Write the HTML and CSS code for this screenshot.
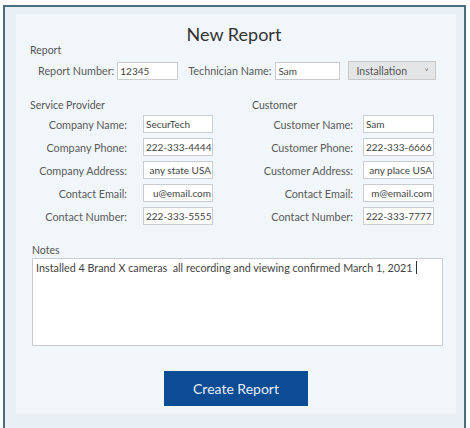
FILE: index.html
```html
<!DOCTYPE html>
<html lang="en">
<head>
  <meta charset="UTF-8">
  <meta name="viewport" content="width=device-width, initial-scale=1.0">
  <title>New Report</title>
  <link rel="stylesheet" href="styles.css">
</head>
<body>
  <div class="window">
    <div class="panel">
      <h1>New Report</h1>

      <div class="group-title">Report</div>
      <div class="report-row">
        <span class="label">Report Number:</span>
        <div class="field num">12345</div>
        <span class="label tech">Technician Name:</span>
        <div class="field tech-field">Sam</div>
        <div class="select">
          <span>Installation</span>
          <span class="arrow">&#709;</span>
        </div>
      </div>

      <div class="columns">
        <div class="group provider">
          <div class="group-title span">Service Provider</div>
          <span class="label">Company Name:</span>
          <div class="field">SecurTech</div>
          <span class="label">Company Phone:</span>
          <div class="field">222-333-4444</div>
          <span class="label">Company Address:</span>
          <div class="field end">any state USA</div>
          <span class="label">Contact Email:</span>
          <div class="field end">u@email.com</div>
          <span class="label">Contact Number:</span>
          <div class="field">222-333-5555</div>
        </div>

        <div class="group customer">
          <div class="group-title span">Customer</div>
          <span class="label">Customer Name:</span>
          <div class="field">Sam</div>
          <span class="label">Customer Phone:</span>
          <div class="field">222-333-6666</div>
          <span class="label">Customer Address:</span>
          <div class="field end">any place USA</div>
          <span class="label">Contact Email:</span>
          <div class="field end">m@email.com</div>
          <span class="label">Contact Number:</span>
          <div class="field">222-333-7777</div>
        </div>
      </div>

      <div class="group-title notes-title">Notes</div>
      <div class="notes">Installed 4 Brand X cameras &nbsp;all recording and viewing confirmed March 1, 2021<span class="caret"></span></div>

      <div class="actions">
        <button class="create">Create Report</button>
      </div>
    </div>
  </div>
</body>
</html>
```

FILE: styles.css
```css
body {
  margin: 0;
  background-color: #fff;
  font-family: Lato, "Noto Sans", sans-serif;
  color: #5a5a5a;
}

.window {
  margin: 5px 4px 0 3px;
  height: 417px;
  border: 2px solid #4b6e7e;
  background-color: #e8f0f6;
  padding: 7px 8px 0 11px;
}

.panel {
  background-color: #f1f6fa;
  height: 400px;
  padding: 0 0 0 14px;
}

h1 {
  margin: 0 0 0 -18px;
  padding-top: 10px;
  font-size: 18px;
  font-weight: normal;
  line-height: 20px;
  color: #333;
  text-align: center;
}

.group-title {
  font-size: 10.5px;
  line-height: 12px;
  color: #555;
}

.label {
  font-size: 10.8px;
  color: #5a5a5a;
  text-align: right;
  white-space: nowrap;
}

.field {
  height: 18px;
  box-sizing: border-box;
  border: 1px solid #c9ccd0;
  background-color: #fff;
  font-size: 10px;
  color: #444;
  display: flex;
  align-items: center;
  padding: 0 2px;
  overflow: hidden;
  white-space: nowrap;
}

.field.end {
  justify-content: flex-end;
  padding-right: 1px;
}

.report-row {
  display: flex;
  align-items: center;
  margin-top: 5px;
  padding-left: 8px;
}

.report-row .label {
  margin-right: 3px;
}

.report-row .num {
  width: 61px;
}

.report-row .tech {
  margin-left: 10px;
  margin-right: 4px;
}

.report-row .tech-field {
  width: 65px;
}

.select {
  width: 88px;
  height: 19px;
  box-sizing: border-box;
  margin-left: 8px;
  border: 1px solid #c9c9c9;
  background-color: #e4e5e6;
  font-size: 10.5px;
  color: #555;
  display: flex;
  align-items: center;
  justify-content: space-between;
  padding: 0 7px;
}

.select .arrow {
  font-size: 8px;
}

.columns {
  display: flex;
  gap: 39px;
  margin-top: 19px;
}

.group {
  display: grid;
  row-gap: 5px;
  align-items: center;
}

.group .span {
  grid-column: 1 / 3;
  margin-bottom: -1px;
}

.provider {
  grid-template-columns: 97px 70px;
  column-gap: 16px;
}

.customer {
  grid-template-columns: 101px 71px;
  column-gap: 10px;
}

.notes-title {
  margin-top: 19px;
  padding-left: 2px;
}

.notes {
  margin: 2px 0 0 2px;
  width: 411px;
  height: 88px;
  box-sizing: border-box;
  border: 1px solid #c9ccd0;
  background-color: #fff;
  font-size: 10.8px;
  color: #444;
  padding: 2px 3px;
  white-space: nowrap;
}

.caret {
  display: inline-block;
  width: 1px;
  height: 13px;
  margin-left: 3px;
  background-color: #333;
  vertical-align: -2px;
}

.actions {
  margin-top: 25px;
  padding-right: 14px;
  text-align: center;
}

.create {
  width: 144px;
  height: 35px;
  border: none;
  background-color: #0b4c95;
  color: #e8eef6;
  font-family: Lato, "Noto Sans", sans-serif;
  font-size: 14px;
  cursor: pointer;
}
```
